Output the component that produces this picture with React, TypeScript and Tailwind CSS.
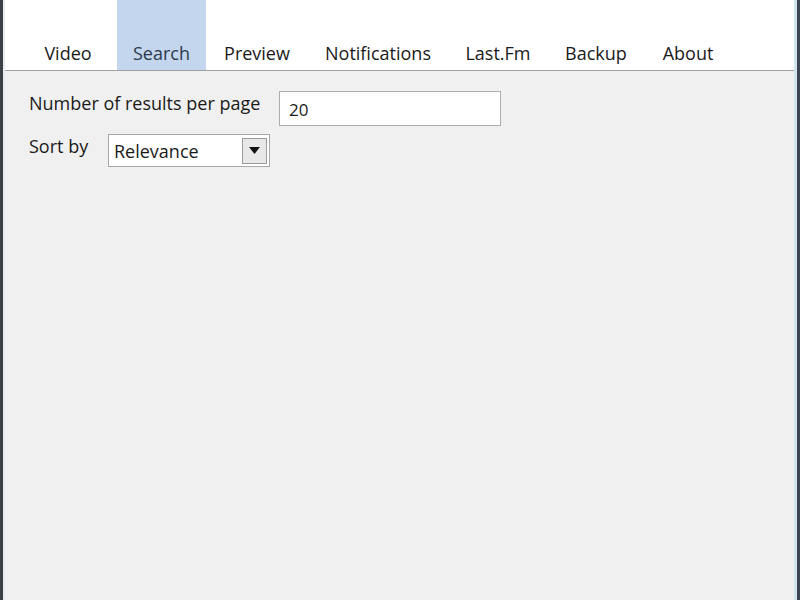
const tabs = [
  { label: "Video", w: "w-[98px]" },
  { label: "Search", w: "w-[89px]", active: true },
  { label: "Preview", w: "w-[102px]" },
  { label: "Notifications", w: "w-[140px]" },
  { label: "Last.Fm", w: "w-[100px]" },
  { label: "Backup", w: "w-[96px]" },
  { label: "About", w: "w-[88px]" },
];

export default function App() {
  return (
    <div
      className="flex h-[600px] w-[800px] bg-[#f0f0f0] text-[#1a1a1a]"
      style={{ fontFamily: '"Open Sans", "Noto Sans", sans-serif' }}
    >
      <div className="w-[3px] bg-[#3c4046]" />
      <div className="w-[2px] bg-[#e8ecf0]" />
      <div className="flex flex-1 flex-col">
        <div className="flex h-[71px] border-b border-[#a0a0a0] bg-white pl-[14px]">
          {tabs.map((t) => (
            <div
              key={t.label}
              className={`${t.w} flex items-end justify-center pb-[3px] text-[18px] ${
                t.active ? "bg-[#c4d6ee] text-[#2a3a4c]" : ""
              }`}
            >
              {t.label}
            </div>
          ))}
        </div>
        <div className="flex flex-col gap-[8px] pl-[24px] pt-[20px]">
          <div className="flex items-start">
            <span className="w-[250px] text-[18px] leading-[24px]">
              Number of results per page
            </span>
            <div className="flex h-[35px] w-[222px] items-center border border-[#adadad] bg-white pl-[9px] pt-[2px] text-[17px]">
              20
            </div>
          </div>
          <div className="flex items-start">
            <span className="w-[79px] text-[18px] leading-[24px]">Sort by</span>
            <div className="flex h-[33px] w-[162px] items-center justify-between border border-[#a8a8a8] bg-white pl-[5px] pr-[2px] text-[18px]">
              <span className="pt-[2px]">Relevance</span>
              <div className="flex h-[26px] w-[25px] items-center justify-center border border-[#9a9a9a] bg-[#e8e8e8]">
                <svg width="11" height="7" viewBox="0 0 11 7">
                  <path d="M0 0 H11 L5.5 7 Z" fill="#111" />
                </svg>
              </div>
            </div>
          </div>
        </div>
        <div className="flex-1" />
      </div>
      <div className="w-[3px] bg-[#cfe6f0]" />
      <div className="w-[3px] bg-[#3c4650]" />
    </div>
  );
}
